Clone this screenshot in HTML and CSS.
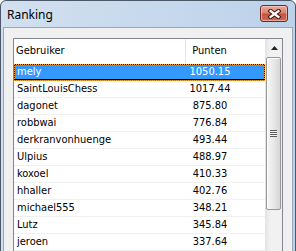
FILE: index.html
```html
<!DOCTYPE html>
<html>
<head>
<meta charset="utf-8">
<link rel="stylesheet" href="styles.css">
</head>
<body>
<div class="window">
  <div class="titlebar">
    <span class="title">Ranking</span>
    <div class="close">
      <svg width="13" height="10" viewBox="0 0 13 10">
        <path d="M2.5 2 L10.5 8 M10.5 2 L2.5 8" stroke="#3d1712" stroke-width="4.2" stroke-linecap="square"/>
        <path d="M2.5 2 L10.5 8 M10.5 2 L2.5 8" stroke="#ffffff" stroke-width="2.2" stroke-linecap="square"/>
      </svg>
    </div>
  </div>
  <div class="client">
    <div class="listbox">
      <div class="listarea">
        <div class="header">
          <div class="hcol c1">Gebruiker</div>
          <div class="hcol c2">Punten</div>
          <div class="hfill"></div>
        </div>
        <div class="rows">
          <div class="row selected"><span class="name">mely</span><span class="pts">1050.15</span></div>
          <div class="row"><span class="name">SaintLouisChess</span><span class="pts">1017.44</span></div>
          <div class="row"><span class="name">dagonet</span><span class="pts">875.80</span></div>
          <div class="row"><span class="name">robbwai</span><span class="pts">776.84</span></div>
          <div class="row"><span class="name">derkranvonhuenge</span><span class="pts">493.44</span></div>
          <div class="row"><span class="name">Ulpius</span><span class="pts">488.97</span></div>
          <div class="row"><span class="name">koxoel</span><span class="pts">410.33</span></div>
          <div class="row"><span class="name">hhaller</span><span class="pts">402.76</span></div>
          <div class="row"><span class="name">michael555</span><span class="pts">348.21</span></div>
          <div class="row"><span class="name">Lutz</span><span class="pts">345.84</span></div>
          <div class="row"><span class="name">jeroen</span><span class="pts">337.64</span></div>
        </div>
      </div>
      <div class="scrollbar">
        <div class="sb-up">
          <svg width="7" height="4" viewBox="0 0 7 4"><path d="M3.5 0 L7 4 L0 4 Z" fill="#222"/></svg>
        </div>
        <div class="thumb"><div class="grip"></div></div>
        <div class="track"></div>
      </div>
    </div>
  </div>
</div>
</body>
</html>
```

FILE: styles.css
```css
html, body {
  margin: 0;
  padding: 0;
  background: #ffffff;
  overflow: hidden;
}
body {
  width: 296px;
  height: 251px;
}
.window {
  box-sizing: border-box;
  width: 296px;
  height: 300px;
  border: 1px solid #4c5868;
  border-radius: 6px 6px 0 0;
  background: linear-gradient(to right, #d2e0f0, #bcd2ea);
  display: flex;
  flex-direction: column;
  padding: 0 2px;
}
.titlebar {
  flex: 0 0 26px;
  height: 26px;
  margin: 0 -2px;
  display: flex;
  align-items: center;
  padding-left: 6px;
  position: relative;
}
.title {
  font-family: "Noto Sans", "Open Sans", sans-serif;
  font-size: 12px;
  color: #000;
  margin-top: 1px;
}
.close {
  position: absolute;
  left: 259px;
  top: 4px;
  box-sizing: border-box;
  width: 28px;
  height: 17px;
  border: 1px solid #6e2a22;
  border-radius: 3px;
  background: linear-gradient(to bottom, #e9aa9c 0%, #d98272 45%, #c65440 55%, #cd6a52 100%);
  box-shadow: inset 0 0 0 1px rgba(255, 220, 210, 0.55);
  display: flex;
  align-items: center;
  justify-content: center;
}
.client {
  flex: 1 1 auto;
  min-height: 0;
  background: #f0f0f0;
  border: 1px solid #9aa6b6;
  border-bottom: none;
  padding: 10px 0 0 9px;
}
.listbox {
  box-sizing: border-box;
  width: 270px;
  height: 250px;
  border: 1px solid #828790;
  background: #fff;
  display: flex;
}
.listarea {
  width: 251px;
  display: flex;
  flex-direction: column;
  font-family: "DejaVu Sans Condensed", "DejaVu Sans", sans-serif;
  font-size: 11px;
  color: #000;
}
.header {
  flex: 0 0 25px;
  height: 25px;
  display: flex;
  background: #fff;
}
.hcol {
  box-sizing: border-box;
  height: 24px;
  line-height: 24px;
  border-right: 1px solid #e5e5e5;
}
.c1 {
  width: 173px;
  padding-left: 2px;
}
.c2 {
  width: 79px;
  padding-left: 6px;
  border-right: none;
}
.hfill {
  flex: 1;
}
.row {
  box-sizing: border-box;
  height: 17px;
  border-bottom: 1px solid #f0f0f0;
  display: flex;
  align-items: center;
  line-height: 16px;
}
.row.selected {
  background: #3399ff;
  color: #fff;
  border-bottom-color: transparent;
  box-shadow: inset 0 0 0 1px #000;
  outline: 1px dotted #ff9c28;
  outline-offset: -1px;
}
.name {
  width: 173px;
  padding-left: 3px;
  box-sizing: border-box;
}
.pts {
  width: 46px;
  text-align: center;
}
.scrollbar {
  width: 17px;
  display: flex;
  flex-direction: column;
  background: linear-gradient(to right, #e3e3e3, #f1f1f1 30%, #f1f1f1);
}
.sb-up {
  flex: 0 0 17px;
  height: 17px;
  display: flex;
  align-items: center;
  justify-content: center;
  margin-left: 1px;
}
.thumb {
  box-sizing: border-box;
  flex: 0 0 153px;
  height: 153px;
  margin: 1px 1px 0 1px;
  border: 1px solid #979797;
  border-radius: 2px;
  background: linear-gradient(to right, #f6f6f6, #e9e9e9 50%, #d6d6d6);
  box-shadow: inset 1px 1px 0 #ffffff;
  display: flex;
  align-items: center;
  justify-content: center;
}
.grip {
  width: 7px;
  height: 7px;
  background: repeating-linear-gradient(to bottom, #5a5a5a 0, #5a5a5a 1px, #f4f4f4 1px, #f4f4f4 2px);
}
.track {
  flex: 1;
}
```
